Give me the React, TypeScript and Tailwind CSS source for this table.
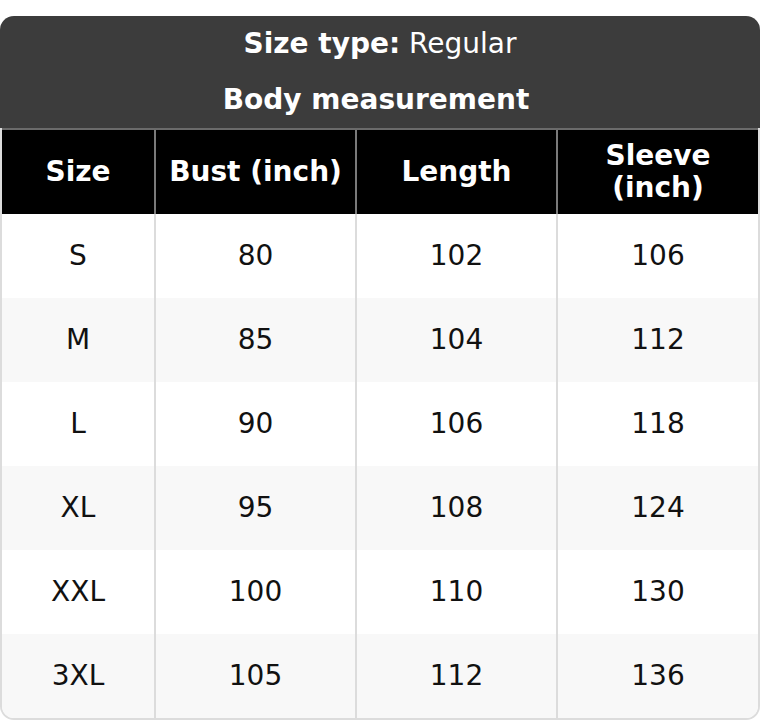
const columns = ["Size", "Bust (inch)", "Length", "Sleeve (inch)"];

const rows = [
  ["S", "80", "102", "106"],
  ["M", "85", "104", "112"],
  ["L", "90", "106", "118"],
  ["XL", "95", "108", "124"],
  ["XXL", "100", "110", "130"],
  ["3XL", "105", "112", "136"],
];

export default function App() {
  return (
    <div
      className="bg-white pt-4 w-[760px]"
      style={{ fontFamily: '"DejaVu Sans", Verdana, sans-serif' }}
    >
      <div className="rounded-t-[14px] bg-[#3c3c3c] text-center text-[28px] text-white">
        <div className="h-14 leading-[56px]">
          <span className="font-bold">Size type:</span> Regular
        </div>
        <div className="h-14 leading-[56px] font-bold pr-2">Body measurement</div>
      </div>
      <div className="rounded-b-[14px] border-x-2 border-b-2 border-[#dcdcdc] overflow-hidden">
        <div className="grid grid-cols-[152px_201px_201px_1fr] border-t-2 border-[#6b6b6b] bg-black text-white font-bold text-[28px] leading-8">
          {columns.map((c, i) => (
            <div
              key={c}
              className={`h-[84px] flex items-center justify-center text-center px-2 ${
                i > 0 ? "border-l-2 border-[#7a7a7a]" : ""
              }`}
            >
              {c}
            </div>
          ))}
        </div>
        {rows.map((r, ri) => (
          <div
            key={r[0]}
            className={`grid grid-cols-[152px_201px_201px_1fr] text-[28px] text-[#111] ${
              ri % 2 === 1 ? "bg-[#f8f8f8]" : "bg-white"
            }`}
          >
            {r.map((v, i) => (
              <div
                key={i}
                className={`h-[84px] flex items-center justify-center ${
                  i > 0 ? "border-l-2 border-[#dcdcdc]" : ""
                }`}
              >
                {v}
              </div>
            ))}
          </div>
        ))}
      </div>
    </div>
  );
}
